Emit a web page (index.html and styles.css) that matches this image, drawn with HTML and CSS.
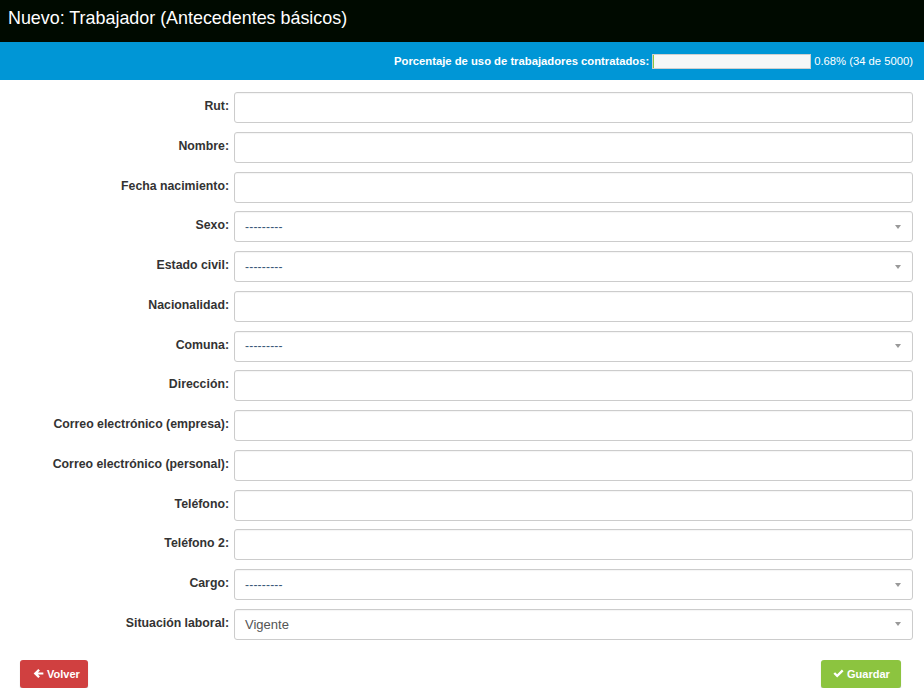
FILE: index.html
```html
<!DOCTYPE html>
<html lang="es">
<head>
<meta charset="utf-8">
<title>Nuevo: Trabajador</title>
<link rel="stylesheet" href="styles.css">
</head>
<body>
<header class="topbar">
  <h1 class="title">Nuevo: Trabajador (Antecedentes básicos)</h1>
</header>
<div class="usage">
  <span class="usage-label">Porcentaje de uso de trabajadores contratados:</span>
  <span class="progress"><span class="progress-fill" style="width:0.68%"></span></span>
  <span class="usage-value">0.68% (34 de 5000)</span>
</div>
<form class="form">
  <div class="row"><label class="lbl">Rut:</label><input class="ctl" type="text"></div>
  <div class="row"><label class="lbl">Nombre:</label><input class="ctl" type="text"></div>
  <div class="row"><label class="lbl">Fecha nacimiento:</label><input class="ctl" type="text"></div>
  <div class="row"><label class="lbl">Sexo:</label><div class="ctl sel"><span class="sel-text dash">---------</span><span class="caret"></span></div></div>
  <div class="row"><label class="lbl">Estado civil:</label><div class="ctl sel"><span class="sel-text dash">---------</span><span class="caret"></span></div></div>
  <div class="row"><label class="lbl">Nacionalidad:</label><input class="ctl" type="text"></div>
  <div class="row"><label class="lbl">Comuna:</label><div class="ctl sel"><span class="sel-text dash">---------</span><span class="caret"></span></div></div>
  <div class="row"><label class="lbl">Dirección:</label><input class="ctl" type="text"></div>
  <div class="row"><label class="lbl">Correo electrónico (empresa):</label><input class="ctl" type="text"></div>
  <div class="row"><label class="lbl">Correo electrónico (personal):</label><input class="ctl" type="text"></div>
  <div class="row"><label class="lbl">Teléfono:</label><input class="ctl" type="text"></div>
  <div class="row"><label class="lbl">Teléfono 2:</label><input class="ctl" type="text"></div>
  <div class="row"><label class="lbl">Cargo:</label><div class="ctl sel"><span class="sel-text dash">---------</span><span class="caret"></span></div></div>
  <div class="row"><label class="lbl">Situación laboral:</label><div class="ctl sel"><span class="sel-text">Vigente</span><span class="caret"></span></div></div>
  <div class="actions">
    <button type="button" class="btn btn-red">
      <svg class="ico" viewBox="0 0 10 10" width="11" height="11"><path d="M0.6 5 L4.8 0.8 L6.3 2.3 L4.5 4 L9.4 4 L9.4 6 L4.5 6 L6.3 7.7 L4.8 9.2 Z" fill="#fff"/></svg>Volver
    </button>
    <button type="button" class="btn btn-green">
      <svg class="ico" viewBox="0 0 10 10" width="11" height="11"><path d="M0.4 5.3 L1.9 3.8 L3.8 5.7 L8.1 1.4 L9.6 2.9 L3.8 8.7 Z" fill="#fff"/></svg>Guardar
    </button>
  </div>
</form>
</body>
</html>
```
FILE: styles.css
```css
* { box-sizing: border-box; }
html, body { margin: 0; padding: 0; background: #fff; }
body { font-family: "Liberation Sans", Arial, Helvetica, sans-serif; color: #333; width: 924px; }

.topbar {
  height: 42px;
  background: #000a00;
  display: flex;
  align-items: center;
  padding: 0 8px;
}
.title {
  margin: 0;
  font-size: 17.9px;
  font-weight: normal;
  color: #fff;
  line-height: 1;
  padding-bottom: 4px;
}

.usage {
  height: 38px;
  background: #0096d6;
  display: flex;
  align-items: center;
  justify-content: flex-end;
  padding: 0 11px 0 0;
  color: #fff;
  font-size: 11.25px;
}
.usage-label { font-weight: bold; margin-right: 3px; }
.progress {
  width: 159px;
  height: 15px;
  background: #f7f7f7;
  border: 1px solid #cfcfcf;
  display: flex;
  margin-right: 3px;
}
.progress-fill { display: block; height: 100%; background: #8cc63f; }
.usage-value { white-space: nowrap; }

.form {
  padding: 12px 11px 0 0;
}
.row {
  display: grid;
  grid-template-columns: 229px 1fr;
  column-gap: 5px;
  margin-bottom: 8.77px;
}
.lbl {
  font-size: 12.3px;
  font-weight: bold;
  text-align: right;
  color: #333;
  padding-top: 7px;
  line-height: 15px;
}
.ctl {
  height: 31px;
  border: 1px solid #ccc;
  border-radius: 3px;
  background: #fff;
  font-family: inherit;
  font-size: 13px;
  margin: 0;
  padding: 0 10px;
  width: 100%;
  box-shadow: inset 0 1px 1px rgba(0,0,0,0.04);
}
.sel {
  display: flex;
  align-items: center;
  justify-content: space-between;
  padding: 0 10px 0 10px;
}
.sel-text { color: #555; font-size: 13px; }
.sel-text.dash { color: #3a5878; font-size: 12px; letter-spacing: 0.2px; }
.caret {
  width: 0; height: 0;
  border-left: 3px solid transparent;
  border-right: 3px solid transparent;
  border-top: 4px solid #999;
  margin-right: 1px;
}

.actions {
  display: flex;
  justify-content: space-between;
  padding: 11px 12px 0 20px;
}
.btn {
  height: 28px;
  border: none;
  border-radius: 3px;
  color: #fff;
  font-family: inherit;
  font-size: 11px;
  font-weight: bold;
  display: flex;
  align-items: center;
  gap: 3px;
  cursor: pointer;
  box-shadow: 0 1px 1px rgba(0,0,0,0.25);
}
.btn-red { background: #d04040; width: 68px; padding: 0 0 0 13px; }
.btn-green { background: #8cc43f; width: 80px; padding: 0 0 0 12px; }
.ico { display: block; }
```
